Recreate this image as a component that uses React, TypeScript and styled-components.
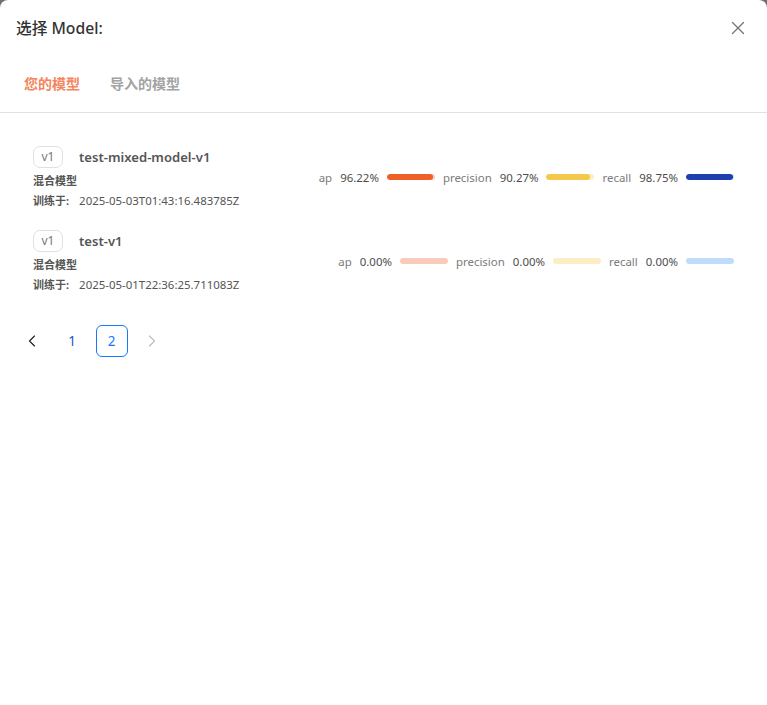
import React from 'react'
import styled, { createGlobalStyle } from 'styled-components'
import { ChevronLeft, ChevronRight, X } from 'lucide-react'

const GlobalStyle = createGlobalStyle`
  html, body {
    margin: 0;
    height: 100%;
    background: #6f6f6f;
  }
  body {
    font-family: "Noto Sans", "Noto Sans CJK SC", sans-serif;
  }
`

const Modal = styled.div`
  width: 767px;
  height: 705px;
  background: #fff;
  border-radius: 8px 8px 0 0;
  overflow: hidden;
`
const Header = styled.div`
  height: 55px;
  padding: 0 20px 0 16px;
  display: flex;
  align-items: center;
  justify-content: space-between;
`
const Title = styled.div`
  font-size: 15.7px;
  font-weight: 500;
  color: #333;
`
const CloseButton = styled.button`
  padding: 0;
  border: none;
  background: none;
  color: #777;
  display: flex;
  margin-right: -2px;
`
const Tabs = styled.div`
  height: 56px;
  padding: 0 0 1px 24px;
  display: flex;
  gap: 30px;
  align-items: center;
  border-bottom: 1px solid #e2e2e2;
`
const Tab = styled.div<{ $active?: boolean }>`
  font-size: 14px;
  font-weight: 700;
  color: ${p => (p.$active ? '#f5845c' : '#a3a3a3')};
`
const List = styled.div`
  padding: 31px 33px 0;
  display: flex;
  flex-direction: column;
  gap: 16px;
`
const Row = styled.div`
  height: 68px;
  display: flex;
  align-items: center;
  justify-content: space-between;
`
const Info = styled.div`
  display: flex;
  flex-direction: column;
`
const NameLine = styled.div`
  display: flex;
  align-items: center;
  gap: 16px;
  height: 22px;
`
const Version = styled.span`
  box-sizing: border-box;
  width: 30px;
  height: 22px;
  border: 1px solid #e0e0e0;
  border-radius: 7px;
  font-size: 12px;
  color: #777;
  display: flex;
  align-items: center;
  justify-content: center;
`
const Name = styled.span`
  font-size: 13.1px;
  font-weight: 600;
  color: #555;
`
const Kind = styled.div`
  margin-top: 3px;
  height: 20px;
  line-height: 20px;
  font-size: 11px;
  font-weight: 700;
  color: #555;
`
const Trained = styled.div`
  height: 20px;
  line-height: 20px;
  font-size: 11.45px;
  color: #555;
  display: flex;
  gap: 10px;
`
const TrainedLabel = styled.span`
  font-size: 11px;
  font-weight: 700;
`
const Metrics = styled.div`
  display: flex;
  align-items: center;
  margin-bottom: 2px;
  gap: 8px;
`
const Metric = styled.div`
  display: flex;
  align-items: center;
`
const MetricLabel = styled.span`
  font-size: 11.45px;
  color: #7b7b7b;
  margin-right: 8px;
`
const MetricValue = styled.span`
  font-size: 11.45px;
  color: #4d4d4d;
  margin-right: 8px;
`
const Track = styled.div<{ $color: string }>`
  width: 48px;
  height: 6px;
  border-radius: 3px;
  background: ${p => p.$color};
  overflow: hidden;
`
const Fill = styled.div<{ $color: string }>`
  height: 100%;
  border-radius: 3px;
  background: ${p => p.$color};
`
const Pagination = styled.div`
  margin: 29px 0 0 16px;
  display: flex;
  align-items: center;
  gap: 8px;
`
const PageItem = styled.div<{ $active?: boolean; $disabled?: boolean; $link?: boolean }>`
  box-sizing: border-box;
  width: 32px;
  height: 32px;
  padding-right: ${p => (p.$active ? '1px' : '0')};
  border-radius: 6px;
  border: 1px solid ${p => (p.$active ? '#1677ff' : 'transparent')};
  color: ${p => (p.$disabled ? '#bdbdbd' : p.$active ? '#1677ff' : p.$link ? '#1a56c4' : '#222')};
  font-size: 13.5px;
  display: flex;
  align-items: center;
  justify-content: center;
`

const barColors = {
  ap: ['#f9cbbb', '#ef5f2a'],
  precision: ['#fcedc5', '#f4c84a'],
  recall: ['#bfdcff', '#1e40af'],
}

type MetricKey = keyof typeof barColors

const models = [
  {
    name: 'test-mixed-model-v1',
    date: '2025-05-03T01:43:16.483785Z',
    scores: { ap: 96.22, precision: 90.27, recall: 98.75 },
  },
  {
    name: 'test-v1',
    date: '2025-05-01T22:36:25.711083Z',
    scores: { ap: 0, precision: 0, recall: 0 },
  },
]

const App: React.FC = () => (
  <>
    <GlobalStyle />
    <Modal>
      <Header>
        <Title>选择 Model:</Title>
        <CloseButton type='button'>
          <X size={22} strokeWidth={1.5} />
        </CloseButton>
      </Header>
      <Tabs>
        <Tab $active>您的模型</Tab>
        <Tab>导入的模型</Tab>
      </Tabs>
      <List>
        {models.map(model => (
          <Row key={model.name}>
            <Info>
              <NameLine>
                <Version>v1</Version>
                <Name>{model.name}</Name>
              </NameLine>
              <Kind>混合模型</Kind>
              <Trained>
                <TrainedLabel>训练于:</TrainedLabel>
                {model.date}
              </Trained>
            </Info>
            <Metrics>
              {(Object.keys(barColors) as MetricKey[]).map(key => (
                <Metric key={key}>
                  <MetricLabel>{key}</MetricLabel>
                  <MetricValue>{model.scores[key].toFixed(2)}%</MetricValue>
                  <Track $color={barColors[key][0]}>
                    <Fill $color={barColors[key][1]} style={{ width: `${model.scores[key]}%` }} />
                  </Track>
                </Metric>
              ))}
            </Metrics>
          </Row>
        ))}
      </List>
      <Pagination>
        <PageItem>
          <ChevronLeft size={20} strokeWidth={1.4} />
        </PageItem>
        <PageItem $link>1</PageItem>
        <PageItem $active>2</PageItem>
        <PageItem $disabled>
          <ChevronRight size={20} strokeWidth={1.4} />
        </PageItem>
      </Pagination>
    </Modal>
  </>
)

export default App
